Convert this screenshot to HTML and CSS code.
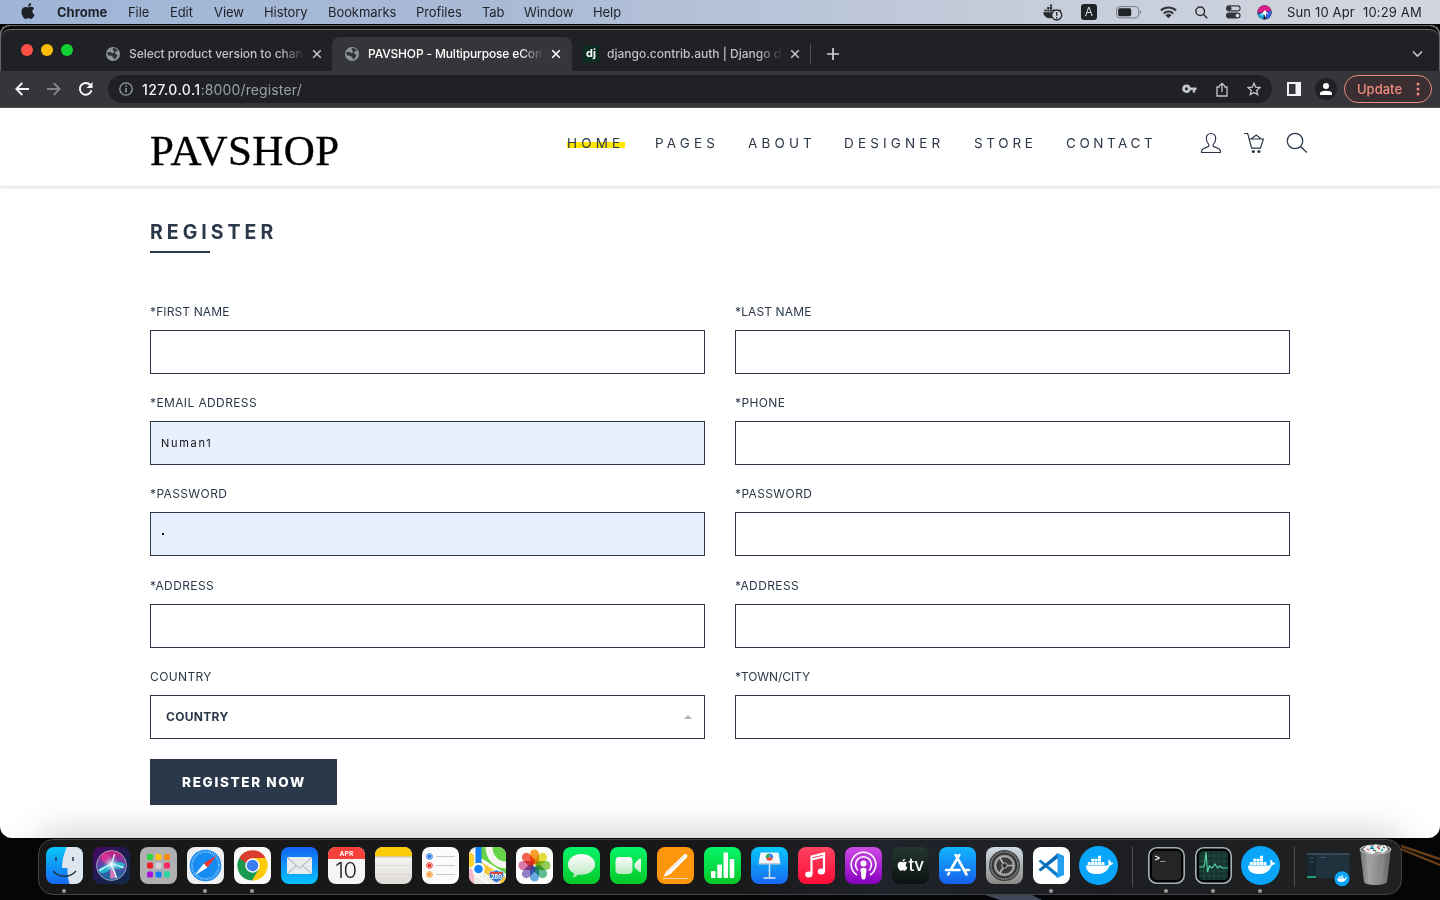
FILE: index.html
```html
<!DOCTYPE html>
<html lang="en">
<head>
<meta charset="utf-8">
<title>PAVSHOP - Multipurpose eCommerce</title>
<link rel="stylesheet" href="styles.css">
</head>
<body>
<svg class="defs" width="0" height="0" aria-hidden="true">
  <defs>
    <linearGradient id="gBlue" x2="0" y2="1"><stop stop-color="#08c8fb"/><stop offset="1" stop-color="#1768f2"/></linearGradient>
    <linearGradient id="gMail" x2="0" y2="1"><stop stop-color="#1465f4"/><stop offset="1" stop-color="#08c2fc"/></linearGradient>
    <linearGradient id="gGreen" x2="0" y2="1"><stop stop-color="#08f56b"/><stop offset="1" stop-color="#04c827"/></linearGradient>
    <linearGradient id="gRed" x2="0" y2="1"><stop stop-color="#fd4461"/><stop offset="1" stop-color="#fb0c35"/></linearGradient>
    <linearGradient id="gPod" x2="0" y2="1"><stop stop-color="#cf4be6"/><stop offset="1" stop-color="#8501bd"/></linearGradient>
    <linearGradient id="gStore" x2="0" y2="1"><stop stop-color="#10b5fb"/><stop offset="1" stop-color="#1760ee"/></linearGradient>
    <linearGradient id="gGrey" x2="0" y2="1"><stop stop-color="#cfdbe2"/><stop offset="1" stop-color="#8b8987"/></linearGradient>
    <linearGradient id="gPaper" x2="0" y2="1"><stop stop-color="#fff"/><stop offset="1" stop-color="#dedbd6"/></linearGradient>
    <linearGradient id="gWhite" x2="0" y2="1"><stop stop-color="#fff"/><stop offset="1" stop-color="#b9e6bf"/></linearGradient>
    <linearGradient id="gTv" x2="0" y2="1"><stop stop-color="#243731"/><stop offset="1" stop-color="#0b1112"/></linearGradient>
    <linearGradient id="gSiri" x1="0" y1="0" x2="1" y2="1"><stop stop-color="#4b0766"/><stop offset=".6" stop-color="#18204c"/><stop offset="1" stop-color="#0d2c4b"/></linearGradient>
    <linearGradient id="gOrb" x1=".5" y1="0" x2=".5" y2="1"><stop stop-color="#d51d7b"/><stop offset=".45" stop-color="#5e44ad"/><stop offset="1" stop-color="#146f9c"/></linearGradient>
    <linearGradient id="gTrash"><stop stop-color="#777"/><stop offset=".3" stop-color="#a8a8a8"/><stop offset=".65" stop-color="#8e8e8e"/><stop offset="1" stop-color="#666"/></linearGradient>
    <radialGradient id="gGlow"><stop stop-color="#fff"/><stop offset=".35" stop-color="#c6f4fb" stop-opacity=".7"/><stop offset="1" stop-color="#6bd" stop-opacity="0"/></radialGradient>
    <clipPath id="tile"><rect width="37" height="37" rx="8"/></clipPath>
    <symbol id="apple" viewBox="0 0 24 24"><path d="M12.152 6.896c-.948 0-2.415-1.078-3.960-1.040-2.040.027-3.910 1.183-4.961 3.014-2.117 3.675-.546 9.103 1.519 12.090 1.013 1.454 2.208 3.090 3.792 3.039 1.520-.065 2.090-.987 3.935-.987 1.831 0 2.350.987 3.960.948 1.637-.026 2.676-1.480 3.676-2.948 1.156-1.688 1.636-3.325 1.662-3.415-.039-.013-3.182-1.221-3.220-4.857-.026-3.040 2.480-4.494 2.597-4.559-1.429-2.090-3.623-2.324-4.390-2.376-2-.156-3.675 1.090-4.610 1.090zM15.530 3.830c.843-1.012 1.400-2.427 1.245-3.830-1.207.052-2.662.805-3.532 1.818-.780.896-1.454 2.338-1.273 3.714 1.338.104 2.715-.688 3.559-1.701"/></symbol>
    <symbol id="whale" viewBox="0 0 28 20"><path d="M.5 10h21.300c.9-.4 1.500-1 1.300-2.100-.7-1.300-.5-2.600.3-3.700 1.300.8 1.700 1.700 1.800 2.800 1-.1 1.900.1 2.600.6-.6 1.400-1.700 2-3.500 2.100-2 5.700-6.200 8.800-12.600 8.800C4.500 18.500.4 16 .5 10zM2.300 6.400h3v3h-3zM5.700 6.400h3v3h-3zM9.100 6.400h3v3h-3zM12.500 6.400h3v3h-3zM15.900 6.400h3v3h-3zM5.700 3.200h3v2.900h-3zM9.100 3.200h3v2.900h-3zM12.500 3.200h3v2.900h-3zM12.500.1h3v2.800h-3z"/></symbol>
    <symbol id="globe" viewBox="0 0 16 16"><circle cx="8" cy="8" r="7" fill="#8d949b"/><path fill="#303236" d="M2 6.500l3-.8 2.500 1.500 1.500-1V4.800L7.500 4l.6-2C10 2 12 3 13 4.800l-2.500.7L10 7.500 12.500 9l-1.400 3-2 1.600-.8-2.400-2-1.500L3 9.500z"/></symbol>
    <symbol id="siri" viewBox="0 0 30 30"><circle cx="15" cy="15" r="14.500" fill="url(#gOrb)" stroke="#a5a2bd" stroke-width=".9"/><path fill="#e73594" opacity=".8" d="M15 15C4 13 3 6 8 3c6 1 8 6 7 12z"/><path fill="#1cc8ce" opacity=".85" d="M15 15c-5-1-11 1-13 5 4 4 10 3 13-5zM15 15c5-5 10-4 13-1-2 6-7 6-13 1z"/><path fill="#fb7bbb" opacity=".8" d="M15 15c-1 5-2 9-1 13l5-1c1-5-1-9-4-12z"/><path d="M3 20l12-7 12 4M18 4l-3 10 5 13" fill="none" stroke="#e9fbff" stroke-width="1.400"/><circle cx="15" cy="14" r="8" fill="url(#gGlow)"/></symbol>
    <symbol id="siri-mini" viewBox="0 0 15 15"><circle cx="7.500" cy="7.500" r="7.200" fill="#22224e"/><path d="M1 8C0 3 4 .5 8 .5S14 3 14 6L8 7z" fill="#d91f86"/><path d="M1 9c0 3 3 5 5 5.200L8 7z" fill="#17a6d3"/><path d="M14 6c.6 4-1 7-4 8L8 7z" fill="#2f62e6"/><path d="M3 11l5-6 4 5-3-2v5l-2-4z" fill="#fff"/></symbol>
    <symbol id="cross" viewBox="0 0 10 10"><path d="M1.200 1.200l7.600 7.600M8.800 1.200L1.200 8.800" fill="none" stroke="currentColor" stroke-width="1.600"/></symbol>
  </defs>
</svg>

<header class="menubar">
  <svg class="mb-apple" width="16" height="16"><use href="#apple"/></svg>
  <nav class="mb-menus">
    <b>Chrome</b><span>File</span><span>Edit</span><span>View</span><span>History</span><span>Bookmarks</span><span>Profiles</span><span>Tab</span><span>Window</span><span>Help</span>
  </nav>
  <div class="mb-status">
    <svg width="20" height="17" viewBox="0 0 20 17"><path fill="#26292d" d="M0 8.300h16c0-1.300 0-2 .7-3 1 .4 1.200 1 1.300 1.800l-3 2.700C12 15 2 17 0 8.300zM1.500 5.500h2.200v2H1.500zM4.200 5.500h2.200v2H4.200zM6.900 5.500h2.200v2H6.900zM9.600 5.500h2.200v2H9.600zM4.200 3h2.200v2H4.200zM6.900 3h2.200v2H6.900zM6.900.5h2.200v2H6.900z"/><circle cx="13.700" cy="11" r="5" fill="#cbd1db" stroke="#26292d" stroke-width="1.300"/><path d="M13.700 8v3.800M13.700 13v1.400" stroke="#26292d" stroke-width="1.400"/></svg>
    <span class="key-a">A</span>
    <svg class="battery" width="26" height="13" viewBox="0 0 26 13"><rect x=".6" y=".6" width="22" height="11.300" rx="3.200" fill="none" stroke="#777d86"/><rect x="2.200" y="2.200" width="13" height="8" rx="1.600" fill="#202328"/><path d="M24 4.300c1.700.7 1.700 3.300 0 4z" fill="#777d86"/></svg>
    <svg width="17" height="13" viewBox="0 0 17 13"><g fill="none" stroke="#33373c" stroke-width="2"><path d="M.9 4.500a11 11 0 0 1 15.200 0"/><path d="M3.700 7.400a7 7 0 0 1 9.600 0"/></g><path d="M5.500 9.300a4.300 4.300 0 0 1 6 0l-3 3z" fill="#33373c"/></svg>
    <svg width="13" height="13" viewBox="0 0 13 13"><g fill="none" stroke="#2b2e33" stroke-width="1.500"><circle cx="5.200" cy="5.200" r="4.300"/><path d="M8.300 8.300l4 4"/></g></svg>
    <svg width="15" height="14" viewBox="0 0 15 14"><rect x=".6" y=".9" width="13.500" height="5" rx="2.500" fill="none" stroke="#33373c" stroke-width="1.100"/><circle cx="3.200" cy="3.400" r="2.400" fill="#33373c"/><rect x="0" y="7.600" width="14.600" height="6" rx="3" fill="#33373c"/><circle cx="11.500" cy="10.600" r="1.800" fill="#dfe4e9"/></svg>
    <svg class="siri-mark" width="15" height="15"><use href="#siri-mini"/></svg>
    <span class="date">Sun 10 Apr</span><span class="time">10:29 AM</span>
  </div>
</header>

<main class="window">
  <div class="tabs">
    <div class="lights"><i class="red"></i><i class="amber"></i><i class="lime"></i></div>
    <div class="tab"><svg class="fav" width="16" height="16"><use href="#globe"/></svg><span class="title t1">Select product version to chang</span><svg class="x" width="10" height="10"><use href="#cross"/></svg></div>
    <div class="tab active"><svg class="fav" width="16" height="16"><use href="#globe"/></svg><span class="title t2">PAVSHOP - Multipurpose eCom</span><svg class="x" width="10" height="10"><use href="#cross"/></svg></div>
    <div class="tab last"><span class="fav dj">dj</span><span class="title t3">django.contrib.auth | Django do</span><svg class="x" width="10" height="10"><use href="#cross"/></svg></div>
    <i class="tab-rule"></i>
    <svg class="plus" width="12" height="12" viewBox="0 0 12 12"><path d="M6 0v12M0 6h12" stroke="#cfd1d4" stroke-width="1.700"/></svg>
    <svg class="chev" width="11" height="8" viewBox="0 0 11 8"><path d="M1 1.500l4.500 4.500L10 1.500" fill="none" stroke="#c5c7ca" stroke-width="1.600"/></svg>
  </div>
  <div class="toolbar">
    <svg width="14" height="14" viewBox="0 0 14 14"><path d="M14 7H1.500M7.300 1L1.300 7l6 6" fill="none" stroke="#f5f6f7" stroke-width="1.800"/></svg>
    <svg width="14" height="14" viewBox="0 0 14 14"><path d="M0 7h12.500M6.700 1l6 6-6 6" fill="none" stroke="#828488" stroke-width="1.800"/></svg>
    <svg width="16" height="16" viewBox="0 0 16 16"><path d="M13.500 9.200A5.900 5.900 0 1 1 12.300 4" fill="none" stroke="#f5f6f7" stroke-width="2"/><path d="M14.500 1v6h-6z" fill="#f5f6f7"/></svg>
    <div class="omnibox">
      <svg width="14" height="14" viewBox="0 0 14 14"><circle cx="7" cy="7" r="6.200" fill="none" stroke="#9aa0a6" stroke-width="1.300"/><path d="M7 6v4.500M7 3.300v1.500" stroke="#9aa0a6" stroke-width="1.500"/></svg>
      <span class="url"><b>127.0.0.1</b>:8000/register/</span>
      <svg width="15" height="10" viewBox="0 0 15 10"><path fill="#c4c7ca" fill-rule="evenodd" d="M4.500.5a4 4 0 0 1 4 3H14.500v2.500h-1.300V8.500h-2.500V6H8.500a4.200 4.200 0 1 1-4-5.500zm0 2.700a1.500 1.500 0 1 0 0 3 1.500 1.500 0 0 0 0-3z"/></svg>
      <svg width="12" height="15" viewBox="0 0 12 15"><path d="M3.800 5H1v9h10V5H8.200M6 10V1.500M3.300 4L6 1.300 8.700 4" fill="none" stroke="#c4c7ca" stroke-width="1.300"/></svg>
      <svg width="14" height="14" viewBox="0 0 14 14"><path d="M7 1.300l1.700 3.900 4.200.4-3.200 2.800 1 4.200L7 10.400l-3.700 2.200 1-4.200L1.100 5.600l4.200-.4z" fill="none" stroke="#c4c7ca" stroke-width="1.300"/></svg>
    </div>
    <svg class="side" width="14" height="14" viewBox="0 0 14 14"><path fill="#f1f3f4" fill-rule="evenodd" d="M0 0h14v14H0zM2 2v10h6.500V2z"/></svg>
    <div class="avatar"><svg width="12" height="12" viewBox="0 0 12 12"><circle cx="6" cy="3" r="3" fill="#fff"/><path d="M0 12V9.700C1 7 11 7 12 9.700V12z" fill="#fff"/></svg></div>
    <div class="update"><span>Update</span><svg width="4" height="14" viewBox="0 0 4 14"><g fill="#f28b82"><circle cx="2" cy="2" r="1.500"/><circle cx="2" cy="7" r="1.500"/><circle cx="2" cy="12" r="1.500"/></g></svg></div>
  </div>

  <section class="page">
    <header class="site-head">
      <div class="logo">PAVSHOP</div>
      <nav class="site-nav"><a class="current">HOME</a><a>PAGES</a><a>ABOUT</a><a>DESIGNER</a><a class="n-store">STORE</a><a class="n-contact">CONTACT</a></nav>
      <div class="site-icons">
        <svg width="22" height="22" viewBox="0 0 22 22"><path d="M11 1.500C7.900 1.500 6.300 3.600 6.300 6.600c0 2.500 1 4.600 2.500 5.800v1.900C7 15.600 1.600 16 1.600 19.300v1.200h18.800v-1.200c0-3.300-5.400-3.700-7.200-5v-1.900c1.500-1.200 2.500-3.300 2.500-5.800 0-3-1.600-5.100-4.700-5.100z" fill="none" stroke="#2b384a" stroke-width="1.200"/></svg>
        <svg width="22" height="22" viewBox="0 0 22 22"><g fill="none" stroke="#2b384a" stroke-width="1.200"><path d="M1 1.500h3.700L8.600 16.200h8.800L20.400 7H6.200M8.500 6.800L13.200 3l4.700 3.800"/></g><circle cx="10.300" cy="19.500" r="1.600" fill="#2b384a"/><circle cx="15.900" cy="19.500" r="1.600" fill="#2b384a"/></svg>
        <svg width="22" height="22" viewBox="0 0 22 22"><g fill="none" stroke="#2b384a" stroke-width="1.300"><circle cx="9" cy="9" r="7.700"/><path d="M14.500 14.500l6.300 6"/></g></svg>
      </div>
    </header>
    <div class="content">
      <h1>REGISTER</h1>
      <form class="fields">
        <label><span>*FIRST NAME</span><div class="input"></div></label>
        <label><span>*LAST NAME</span><div class="input"></div></label>
        <label><span class="wide">*EMAIL ADDRESS</span><div class="input filled">Numan1</div></label>
        <label><span class="wide">*PHONE</span><div class="input"></div></label>
        <label><span class="wide">*PASSWORD</span><div class="input filled"><i class="bullet"></i></div></label>
        <label><span class="wide">*PASSWORD</span><div class="input"></div></label>
        <label><span class="wide">*ADDRESS</span><div class="input"></div></label>
        <label><span class="wide">*ADDRESS</span><div class="input"></div></label>
        <label><span class="wide">COUNTRY</span><div class="input select">COUNTRY<i class="caret"></i></div></label>
        <label><span class="tight">*TOWN/CITY</span><div class="input"></div></label>
      </form>
      <button class="submit" type="button">REGISTER NOW</button>
    </div>
  </section>
</main>

<footer class="desk">
  <svg class="road" width="39" height="62" viewBox="0 0 39 62"><path d="M0 8l39 13M0 11l39 16" stroke="#6b4119" stroke-width="2.400"/></svg>
  <svg class="glint" width="60" height="6" viewBox="0 0 60 6"><path d="M0 0h48l12 6H18z" fill="#485066"/></svg>
  <div class="dock">
    <div class="app on"><svg viewBox="0 0 37 37"><g clip-path="url(#tile)"><path fill="url(#gBlue)" d="M0 0h37v37H0z"/><path fill="#dfe5ee" d="M21 0c-3 6-5 13-5 21h5.500c-.3 6 .5 11 2 16H37V0z"/></g><path d="M10 10v4M27 10v4" stroke="#203347" stroke-width="1.500"/><path d="M7 24c6 7 17 7 23 0" fill="none" stroke="#203347" stroke-width="1.300"/></svg></div>
    <div class="app"><svg viewBox="0 0 37 37"><rect width="37" height="37" rx="8" fill="url(#gSiri)"/><use href="#siri" x="3" y="3" width="31" height="31"/></svg></div>
    <div class="app"><svg viewBox="0 0 37 37"><rect width="37" height="37" rx="8" fill="#b0b0b2"/><g><rect x="7" y="7" width="6" height="6" rx="1.500" fill="#29d63e"/><rect x="15.500" y="7" width="6" height="6" rx="1.500" fill="#ffc60b"/><rect x="24" y="7" width="6" height="6" rx="1.500" fill="#fb8b0d"/><rect x="7" y="15.500" width="6" height="6" rx="1.500" fill="#f01c26"/><rect x="15.500" y="15.500" width="6" height="6" rx="1.500" fill="#cfd3d5"/><rect x="24" y="15.500" width="6" height="6" rx="1.500" fill="#fa2b63"/><rect x="7" y="24.500" width="6" height="6" rx="1.500" fill="#a716dc"/><rect x="15.500" y="24.500" width="6" height="6" rx="1.500" fill="#1180f6"/><rect x="24" y="24.500" width="6" height="6" rx="1.500" fill="#2cd69a"/></g></svg></div>
    <div class="app on"><svg viewBox="0 0 37 37"><rect width="37" height="37" rx="8" fill="#eef0f1"/><circle cx="18.500" cy="18.500" r="15.800" fill="#168bf2"/><circle cx="18.500" cy="18.500" r="13.500" fill="none" stroke="#c5e5ff" stroke-width="2" stroke-dasharray=".7 1.420"/><path d="M29.500 8.500L16.700 16.500l3.800 4z" fill="#f5322c"/><path d="M7.500 28.500l9.200-12 3.800 4z" fill="#fff"/></svg></div>
    <div class="app on"><svg viewBox="0 0 37 37"><rect width="37" height="37" rx="8" fill="#fafafa"/><path d="M18.500 18.500L5.300 11a15 15 0 0 1 26.300 0z" fill="#dc3c2e"/><path d="M18.500 18.500L31.600 11A15 15 0 0 1 18 33.500z" fill="#fdcb0a"/><path d="M18.500 18.500L18 33.500A15 15 0 0 1 5.300 11z" fill="#179b51"/><path d="M18.500 11h13.100L25 22z" fill="#fdcb0a"/><path d="M5.300 11l6.700 11.500L18.500 11z" fill="#dc3c2e"/><path d="M5.300 11l6.700 11.500V16z" fill="#179b51"/><path d="M18 33.500l7-11.500-6.500 3.500-6.500-3z" fill="#179b51"/><circle cx="18.500" cy="18.500" r="7.200" fill="#fff"/><circle cx="18.500" cy="18.500" r="5.800" fill="#3c7df0"/></svg></div>
    <div class="app"><svg viewBox="0 0 37 37"><rect width="37" height="37" rx="8" fill="url(#gMail)"/><rect x="6" y="10" width="25" height="17" rx="1.500" fill="#e9ecef"/><path d="M6.500 10.500l12 11 12-11M6.500 26.500l9-8M30.500 26.500l-9-8" fill="none" stroke="#9fa6ad"/></svg></div>
    <div class="app"><svg viewBox="0 0 37 37"><g clip-path="url(#tile)"><path d="M0 0h37v37H0z" fill="#f7f5f3"/><path d="M0 0h37v12H0z" fill="#f7403a"/></g><text class="cal-m" x="18.500" y="9" text-anchor="middle">APR</text><text class="cal-d" x="18" y="31" text-anchor="middle">10</text></svg></div>
    <div class="app"><svg viewBox="0 0 37 37"><g clip-path="url(#tile)"><path d="M0 0h37v37H0z" fill="url(#gPaper)"/><path d="M0 0h37v9.500H0z" fill="#fbcb08"/><path d="M0 10h37" stroke="#aaa" stroke-width=".7"/><path d="M0 18.500h37M0 27.500h37" stroke="#cfccc8" stroke-width=".6"/></g></svg></div>
    <div class="app"><svg viewBox="0 0 37 37"><rect width="37" height="37" rx="8" fill="#fbfbfb"/><path d="M14 9.500h19M14 18.500h19M14 27.500h19" stroke="#bbb" stroke-width=".8"/><g stroke-width="1" fill="none"><circle cx="7.500" cy="9.500" r="2.900" stroke="#2c7bec"/><circle cx="7.500" cy="18.500" r="2.900" stroke="#ed3e39"/><circle cx="7.500" cy="27.500" r="2.900" stroke="#f39b38"/></g><circle cx="7.500" cy="9.500" r="2" fill="#2c7bec"/><circle cx="7.500" cy="18.500" r="2" fill="#ed3e39"/><circle cx="7.500" cy="27.500" r="2" fill="#f39b38"/></svg></div>
    <div class="app"><svg viewBox="0 0 37 37"><g clip-path="url(#tile)"><path d="M0 0h37v37H0z" fill="#f1efe9"/><path d="M12 0h25v28L12 12z" fill="#66d349"/><path d="M0 5l5 3v12H0z" fill="#fbd12f"/><path d="M20 0c0 10 7 18 17 18" fill="none" stroke="#f6f5f0" stroke-width="7"/><path d="M4 37V25l16 12z" fill="#ecebe5"/><path d="M0 22h5v15H0z" fill="#f5b6c6"/><path d="M10 18l27 17" stroke="#fbc62d" stroke-width="7"/><path d="M12 12l25 16M4 26l16 11" stroke="#fff" stroke-width="1.500"/><path d="M6.500 0h6v20h-6z" fill="#1181f8"/><circle cx="9.500" cy="22" r="6.300" fill="#fff"/><circle cx="9.500" cy="22" r="4.300" fill="#1181f8"/><path d="M21 24c3 1 4 0 6.500-1 2.500 1 3.500 2 6.500 1 2 5 0 9-6.500 11.500C21 33 19 29 21 24z" fill="#2d75ca" stroke="#dfe8f2" stroke-width=".7"/><path d="M21.500 25h12v2.200h-12z" fill="#e6473d"/></g><text class="map-n" x="27.500" y="32" text-anchor="middle">280</text></svg></div>
    <div class="app"><svg viewBox="0 0 37 37"><rect width="37" height="37" rx="8" fill="#fcfcfc"/><g class="petals"><rect x="14" y="2.500" width="9" height="15" rx="4.500" fill="#fb9205"/><rect x="14" y="2.500" width="9" height="15" rx="4.500" fill="#dddb18" transform="rotate(45 18.500 18.500)"/><rect x="14" y="2.500" width="9" height="15" rx="4.500" fill="#83c53b" transform="rotate(90 18.500 18.500)"/><rect x="14" y="2.500" width="9" height="15" rx="4.500" fill="#44b17b" transform="rotate(135 18.500 18.500)"/><rect x="14" y="2.500" width="9" height="15" rx="4.500" fill="#4d9de0" transform="rotate(180 18.500 18.500)"/><rect x="14" y="2.500" width="9" height="15" rx="4.500" fill="#8069bd" transform="rotate(225 18.500 18.500)"/><rect x="14" y="2.500" width="9" height="15" rx="4.500" fill="#d9629c" transform="rotate(270 18.500 18.500)"/><rect x="14" y="2.500" width="9" height="15" rx="4.500" fill="#f34a37" transform="rotate(315 18.500 18.500)"/></g></svg></div>
    <div class="app"><svg viewBox="0 0 37 37"><rect width="37" height="37" rx="8" fill="url(#gGreen)"/><path d="M18.500 7C11 7 5 11.500 5 17.500c0 4 2.300 7.200 6.300 9-.2 1.600-.8 2.700-1.800 3.800 2.400-.2 4-1 5.600-2.700 9.300 1.200 17-3.500 17-10.100C32 11.500 26 7 18.500 7z" fill="url(#gWhite)"/></svg></div>
    <div class="app"><svg viewBox="0 0 37 37"><rect width="37" height="37" rx="8" fill="url(#gGreen)"/><rect x="5.500" y="10" width="17" height="17" rx="4" fill="url(#gWhite)"/><path d="M24.500 16.500l4.500-4.300c1-.8 2-.5 2 .8v11c0 1.300-1 1.600-2 .8l-4.500-4.300z" fill="url(#gWhite)"/></svg></div>
    <div class="app"><svg viewBox="0 0 37 37"><rect width="37" height="37" rx="8" fill="#fd960c"/><path d="M6 31.500h25" stroke="#ffd9a5"/><path d="M6.500 29.800l2.500-5L27 7.500c1.600-1.300 4.300.8 3 2.700L13.300 27.300z" fill="#fff"/><path d="M10 25.500l17.500-16" stroke="#c9c2bb" stroke-width=".7"/></svg></div>
    <div class="app"><svg viewBox="0 0 37 37"><rect width="37" height="37" rx="8" fill="url(#gGreen)"/><g fill="#fff"><rect x="7" y="24" width="4.600" height="7" rx=".8"/><rect x="13.300" y="17.500" width="4.600" height="13.500" rx=".8"/><rect x="19.500" y="5.500" width="4.600" height="25.500" rx=".8"/><rect x="25.700" y="12" width="4.600" height="19" rx=".8"/></g></svg></div>
    <div class="app"><svg viewBox="0 0 37 37"><rect width="37" height="37" rx="8" fill="url(#gBlue)"/><path d="M9.500 5.500h18l1.800 10.500H7.700z" fill="#f4f7f9"/><path d="M7.700 16h21.600v1.500H7.700z" fill="#c3ccd3"/><path d="M18.500 17.500v13" stroke="#dbe5ec" stroke-width="1.500"/><path d="M12.500 31h12" stroke="#dbe5ec" stroke-width="1.600"/><path d="M18.500 6.500v3.500l-3.500 1.500c-1-2.500.7-5 3.500-5z" fill="#26ad61"/><path d="M18.500 6.500c2.500 0 4.300 2.300 3.500 4.700l-3.500-1.200z" fill="#2b87eb"/><path d="M15 11.500l3.500-1.500 3.500 1.200c-1 3-5.500 3.500-7 .3z" fill="#ee4a33"/></svg></div>
    <div class="app"><svg viewBox="0 0 37 37"><rect width="37" height="37" rx="8" fill="url(#gRed)"/><path d="M13.500 27V9.500l12.500-3V24M13.500 12.500l12.500-3" fill="none" stroke="#fff" stroke-width="2.200"/><ellipse cx="10.800" cy="27.500" rx="3.600" ry="3" fill="#fff"/><ellipse cx="23.300" cy="24.500" rx="3.600" ry="3" fill="#fff"/></svg></div>
    <div class="app"><svg viewBox="0 0 37 37"><rect width="37" height="37" rx="8" fill="url(#gPod)"/><g fill="none" stroke="#fff" stroke-width="1.600"><path d="M12 28a12.300 12.300 0 1 1 13 0"/><path d="M13 23.500a8 8 0 1 1 11 0"/></g><circle cx="18.500" cy="16.500" r="3" fill="#fff"/><path d="M15.500 23c0-3 6-3 6 0l-1 8c-.5 2-3.500 2-4 0z" fill="#fff"/></svg></div>
    <div class="app"><svg viewBox="0 0 37 37"><rect width="37" height="37" rx="8" fill="url(#gTv)"/><use href="#apple" x="4.500" y="11.500" width="12" height="12.500" fill="#fff"/><text class="tv" x="16.500" y="24">tv</text></svg></div>
    <div class="app"><svg viewBox="0 0 37 37"><rect width="37" height="37" rx="8" fill="url(#gStore)"/><g stroke="#fff" stroke-width="2.600" stroke-linecap="round"><path d="M20.300 8L12.500 21.500M16.700 8L27.500 27.500M7 23h13.500M25.500 23H30M10 26l-.8 1.500"/></g></svg></div>
    <div class="app"><svg viewBox="0 0 37 37"><rect width="37" height="37" rx="8" fill="url(#gGrey)"/><circle cx="18.500" cy="18.500" r="15.500" fill="#3c3d3d"/><circle cx="18.500" cy="18.500" r="13.600" fill="none" stroke="#999" stroke-width="1.500" stroke-dasharray="1 .8"/><circle cx="18.500" cy="18.500" r="11.500" fill="#858686" stroke="#292929" stroke-width="1.200"/><circle cx="18.500" cy="18.500" r="9" fill="#3c3d3d" stroke="#b5b5b5" stroke-width="1.300"/><path d="M18.500 18.500L13.500 10.500M18.500 18.500H28M18.500 18.500L13.500 26.500" stroke="#b5b5b5" stroke-width="1.700"/><circle cx="18.500" cy="18.500" r="2.700" fill="#333" stroke="#bbb"/></svg></div>
    <div class="app on"><svg viewBox="0 0 37 37"><rect width="37" height="37" rx="8" fill="#fff"/><path d="M5.500 14.200L7.500 12.500 25 26.500V31z" fill="#087cc9"/><path d="M5.500 22.500l2 2L25 11V6z" fill="#0668b5"/><path d="M24.300 6l6.700 3v19l-6.700 3-1.300-1 1.500-1.500v-20L23 7z" fill="#25a0ee"/></svg></div>
    <div class="app"><svg class="round" viewBox="0 0 39 39"><circle cx="19.500" cy="19.500" r="19.500" fill="#08a5fb"/><use href="#whale" x="6.500" y="9.500" width="28" height="20" fill="#fff"/></svg></div>
    <i class="rule"></i>
    <div class="app on"><svg viewBox="0 0 37 37"><rect x=".8" y=".8" width="35.400" height="35.400" rx="8" fill="#000" stroke="#a3b3b5" stroke-width="1.600"/><rect x="4" y="4" width="29" height="29" rx="4.500" fill="#252525"/><text class="term" x="6.500" y="13.500">&gt;_</text></svg></div>
    <div class="app on"><svg viewBox="0 0 37 37"><rect x=".8" y=".8" width="35.400" height="35.400" rx="8" fill="#000" stroke="#a3b3b5" stroke-width="1.600"/><rect x="4" y="4" width="29" height="29" rx="4" fill="#15332d"/><path d="M9 4v29M14 4v29M19 4v29M24 4v29M29 4v29M4 9h29M4 14h29M4 19h29M4 24h29M4 29h29" stroke="#29574c" stroke-width=".6"/><path d="M4 20h4.500l1.200-3L11 5l1.500 20 1.800-6L17 21l3-4 2.500 4 2.500-2 2 2h6" fill="none" stroke="#54d5a8" stroke-width="1.100"/></svg></div>
    <div class="app on"><svg class="round" viewBox="0 0 39 39"><circle cx="19.500" cy="19.500" r="19.500" fill="#08a5fb"/><use href="#whale" x="6.500" y="9.500" width="28" height="20" fill="#fff"/></svg></div>
    <i class="rule"></i>
    <svg class="mini" width="43" height="34" viewBox="0 0 43 34"><path d="M0 0h42.500v25H0z" fill="#20323d"/><path d="M0 0h42.500v2H0z" fill="#344953"/><path d="M0 2h9v21H0z" fill="#182832"/><path d="M0 23h9v2H0z" fill="#1f9f79"/><path d="M12 4.500h7M2 5h5M2 9h5" stroke="#426172" stroke-width=".8"/><circle cx="35" cy="25.800" r="7.500" fill="#08a5fb"/><use href="#whale" x="30" y="22" width="10.500" height="7.500" fill="#fff"/></svg>
    <svg class="trash" width="33" height="42" viewBox="0 0 33 42"><path d="M1 5h31l-4 33c-1 4-22 4-23 0z" fill="url(#gTrash)" opacity=".95"/><path d="M8 10l2 27M25 10l-3 27" stroke="#c9c9c9" opacity=".25"/><ellipse cx="16.500" cy="5.500" rx="15.500" ry="4.500" fill="#777" stroke="#c9c9c9"/><path d="M4 5l5-4 4 2 4-3 3 3 6-2 3 5-5 3-6-1-5 2-6-2z" fill="#eee"/><path d="M11 5l2-2 2 2M22 7l2-2" stroke="#1db0c5" stroke-width="1.500"/><path d="M18 3l3 2M8 5l2 1" stroke="#b94431" stroke-width="1.300"/><path d="M14 6l3 1M24 3l2 1" stroke="#333"/></svg>
  </div>
</footer>
</body>
</html>
```
FILE: styles.css
```css
* { box-sizing: border-box; }
body {
  margin: 0; width: 1440px; height: 900px; overflow: hidden;
  display: flex; flex-direction: column;
  background: #050607; font-family: Inter, "Liberation Sans", sans-serif;
}
svg { display: block; flex: none; }
.defs { position: absolute; }

/* macOS menu bar */
.menubar {
  height: 24px; flex: none; display: flex; align-items: center; padding: 0 18px 0 20px;
  background: linear-gradient(90deg, #9fb5d7, #a9bad6 35%, #c5ccda 70%, #d2d7df);
  color: #1e2126; font-size: 13px; line-height: 24px;
}
.mb-apple { margin-top: -2px; fill: #1e2126; }
.mb-menus { margin-left: 21px; display: grid; grid-template-columns: 71px 42px 44px 50px 64px 88px 66px 42px 69px 40px; white-space: nowrap; }
.mb-menus span { letter-spacing: -.08px; }
.mb-menus b { font-weight: 700; letter-spacing: 0; }
.mb-status { margin-left: auto; display: flex; align-items: center; gap: 18px; white-space: nowrap; }
.key-a { width: 16px; height: 16px; border-radius: 3px; background: #1e2126; color: #d5dae2; font-size: 12px; line-height: 16px; text-align: center; }
.battery { margin-left: 1px; }
.siri-mark { margin-left: -2px; }
.date { width: 76px; margin-left: -3px; letter-spacing: .15px; }
.time { width: 59px; margin-left: -18px; letter-spacing: .15px; }

/* Browser window */
.window {
  height: 814px; flex: none; display: flex; flex-direction: column; overflow: hidden;
  border-top: 1px solid #000; border-radius: 10px 10px 12px 12px;
  background: #fff;
}
.tabs {
  height: 46px; flex: none; display: flex; align-items: flex-end; background: #202124;
  border: 1px solid #626365; border-bottom: 0; border-radius: 10px 10px 0 0; box-shadow: inset 0 3px 0 #0b0b0c, inset 0 4px 0 #66676a;
}
.lights { display: flex; gap: 8px; margin: 0 18px 15px 20px; }
.lights i { width: 12px; height: 12px; border-radius: 50%; }
.red { background: #ff4f45; }
.amber { background: #ffbd08; }
.lime { background: #11d133; }
.tab { width: 241px; height: 34px; display: flex; align-items: center; padding: 0 10px 0 14px; color: #bfc2c6; font-size: 12px; font-weight: 500; }
.tab.active { width: 240px; padding: 0 11px 0 12px; background: #35363a; color: #fff; border-radius: 8px 8px 0 0; }
.tab.last { width: 239px; padding: 0 11px; }
.fav { flex: none; }
.title { width: 176px; margin-left: 8px; overflow: hidden; white-space: nowrap; line-height: 18px; mask-image: linear-gradient(90deg, #000 86%, transparent 100%); }
.t1 { letter-spacing: -.05px; }
.t2 { letter-spacing: -.15px; }
.t3 { letter-spacing: 0; }
.x { margin-left: auto; }
.dj { width: 16px; height: 16px; background: #092e20; color: #fff; font-size: 11px; line-height: 14px; font-weight: 700; text-align: center; }
.tab-rule { width: 1px; height: 20px; margin: 0 16px 7px -1px; background: #525356; }
.plus { margin-bottom: 11px; }
.chev { margin: 0 16px 13px auto; }
.toolbar { height: 37px; flex: none; display: flex; align-items: center; padding: 0 8px 0 15px; background: #35363a; border-bottom: 1px solid #55565a; }
.toolbar > svg { margin-right: 18px; }
.toolbar > svg:nth-child(2) { margin-right: 17px; }
.toolbar > svg:nth-child(3) { margin-right: 14px; }
.omnibox { width: 1164px; height: 28px; border-radius: 14px; background: #202124; display: flex; align-items: center; padding: 0 11px; }
.url { margin-left: 9px; margin-right: auto; color: #9aa0a6; font-size: 14px; letter-spacing: .13px; }
.url b { font-weight: 500; color: #f1f3f4; letter-spacing: .45px; }
.omnibox svg + svg { margin-left: 19px; }
.toolbar > .side { margin: 0 14px 0 15px; }
.avatar { width: 22px; height: 22px; border-radius: 50%; background: #202124; display: grid; place-items: center; }
.update { width: 88px; height: 28px; margin-left: auto; border: 1px solid #f28b82; border-radius: 14px; background: #3b2e30; color: #f28b82; font-size: 13px; font-weight: 500; display: flex; align-items: center; justify-content: space-between; padding: 0 11px 0 12px; }

/* Shop page */
.page { flex: 1; color: #2b384a; }
.site-head { height: 79px; display: flex; align-items: flex-start; padding-left: 150px; border-bottom: 1px solid #e3e6e6; box-shadow: 0 1px 4px rgba(0,0,0,.1); }
.logo { width: 417px; margin-top: 19px; font: 43px/48px "Liberation Serif", serif; color: #000; letter-spacing: .45px; -webkit-text-stroke: .4px #000; }
.site-nav { width: 633px; margin-top: 26px; display: grid; grid-template-columns: 88px 93px 96px 130px 92px 1fr; font-size: 13.500px; line-height: 18px; letter-spacing: 4.150px; }
.site-nav a { justify-self: start; }
.site-nav .n-store { letter-spacing: 3.700px; }
.site-nav .n-contact { letter-spacing: 3.550px; }
.site-nav .current { width: 58px; background: linear-gradient(#ffe600, #ffe600) 0 8px / 100% 6px no-repeat; }
.site-icons { display: flex; gap: 21px; margin-top: 24px; }
.content { padding: 34px 150px 0; }
h1 { position: relative; margin: 0; padding-bottom: 9px; font-size: 19.500px; line-height: 22px; font-weight: 700; letter-spacing: 4px; }
h1::after { content: ""; display: block; width: 60px; height: 2px; margin-top: 8px; margin-bottom: -10px; background: #2b384a; }
.fields { display: grid; grid-template-columns: 555px 555px; column-gap: 30px; grid-auto-rows: 91.250px; margin-top: 49.800px; font-size: 12px; }
.fields label { display: flex; flex-direction: column; }
.fields span { height: 28px; padding-top: 1px; line-height: 18px; letter-spacing: .12px; }
.fields .wide { letter-spacing: .38px; }
.fields .tight { letter-spacing: -.08px; }
.input { height: 44px; border: 1px solid #2b384a; padding: 0 10px; display: flex; align-items: center; background: #fff; }
.filled { background: #e8effe; color: #111; font-size: 11px; letter-spacing: 1.700px; }
.bullet { width: 2px; height: 2px; margin-left: 1px; background: #111; }
.select { padding: 0 12px 0 15px; justify-content: space-between; font-weight: 700; letter-spacing: .3px; }
.caret { border: 4px solid transparent; border-top: 0; border-bottom-color: #b5b5b5; }
.submit { display: block; width: 187px; height: 46px; margin-top: 1px; padding: 0; border: 0; background: #2b384a; color: #fff; font: 800 13.500px Inter, sans-serif; letter-spacing: 1.650px; text-indent: 1px; }

/* Desktop and dock */
.desk { position: relative; flex: 1; padding: 1px 38px 0; }
.road { position: absolute; right: 0; top: 0; }
.glint { position: absolute; left: 982px; top: 56px; }
.dock { position: relative; width: 1364px; height: 56px; padding: 7px 0 0 7px; display: flex; gap: 10px; border: 1px solid #444548; border-radius: 15px; background: linear-gradient(90deg, #181818 50%, #20232b 62%, #1d1e21 78%, #202122); box-shadow: 0 0 40px rgba(0,0,0,.27); }
.app { position: relative; width: 37px; height: 37px; flex: none; }
.app > svg { width: 37px; height: 37px; }
.app > .round { width: 39px; height: 39px; margin: -1px; }
.petals rect { opacity: .85; mix-blend-mode: multiply; }
.on::after { content: ""; position: absolute; left: 16px; top: 42px; width: 4px; height: 4px; border-radius: 50%; background: #9b9b9b; }
.rule { width: 1px; height: 41px; margin: -1px 5px 0; background: #4c4d4f; }
.mini { margin: 6px 0 0 -3px; }
.trash { margin: -3px 0 0 -1px; }
.cal-m { font: 700 6.500px Inter, sans-serif; fill: #fff; letter-spacing: .3px; }
.cal-d { font: 300 22px Inter, sans-serif; fill: #222; letter-spacing: -.4px; }
.map-n { font: 700 5.500px Inter, sans-serif; fill: #fff; }
.tv { font: 500 17px Inter, sans-serif; fill: #fff; letter-spacing: -.3px; }
.term { font: 700 9px "Liberation Mono", monospace; fill: #fff; }
```
